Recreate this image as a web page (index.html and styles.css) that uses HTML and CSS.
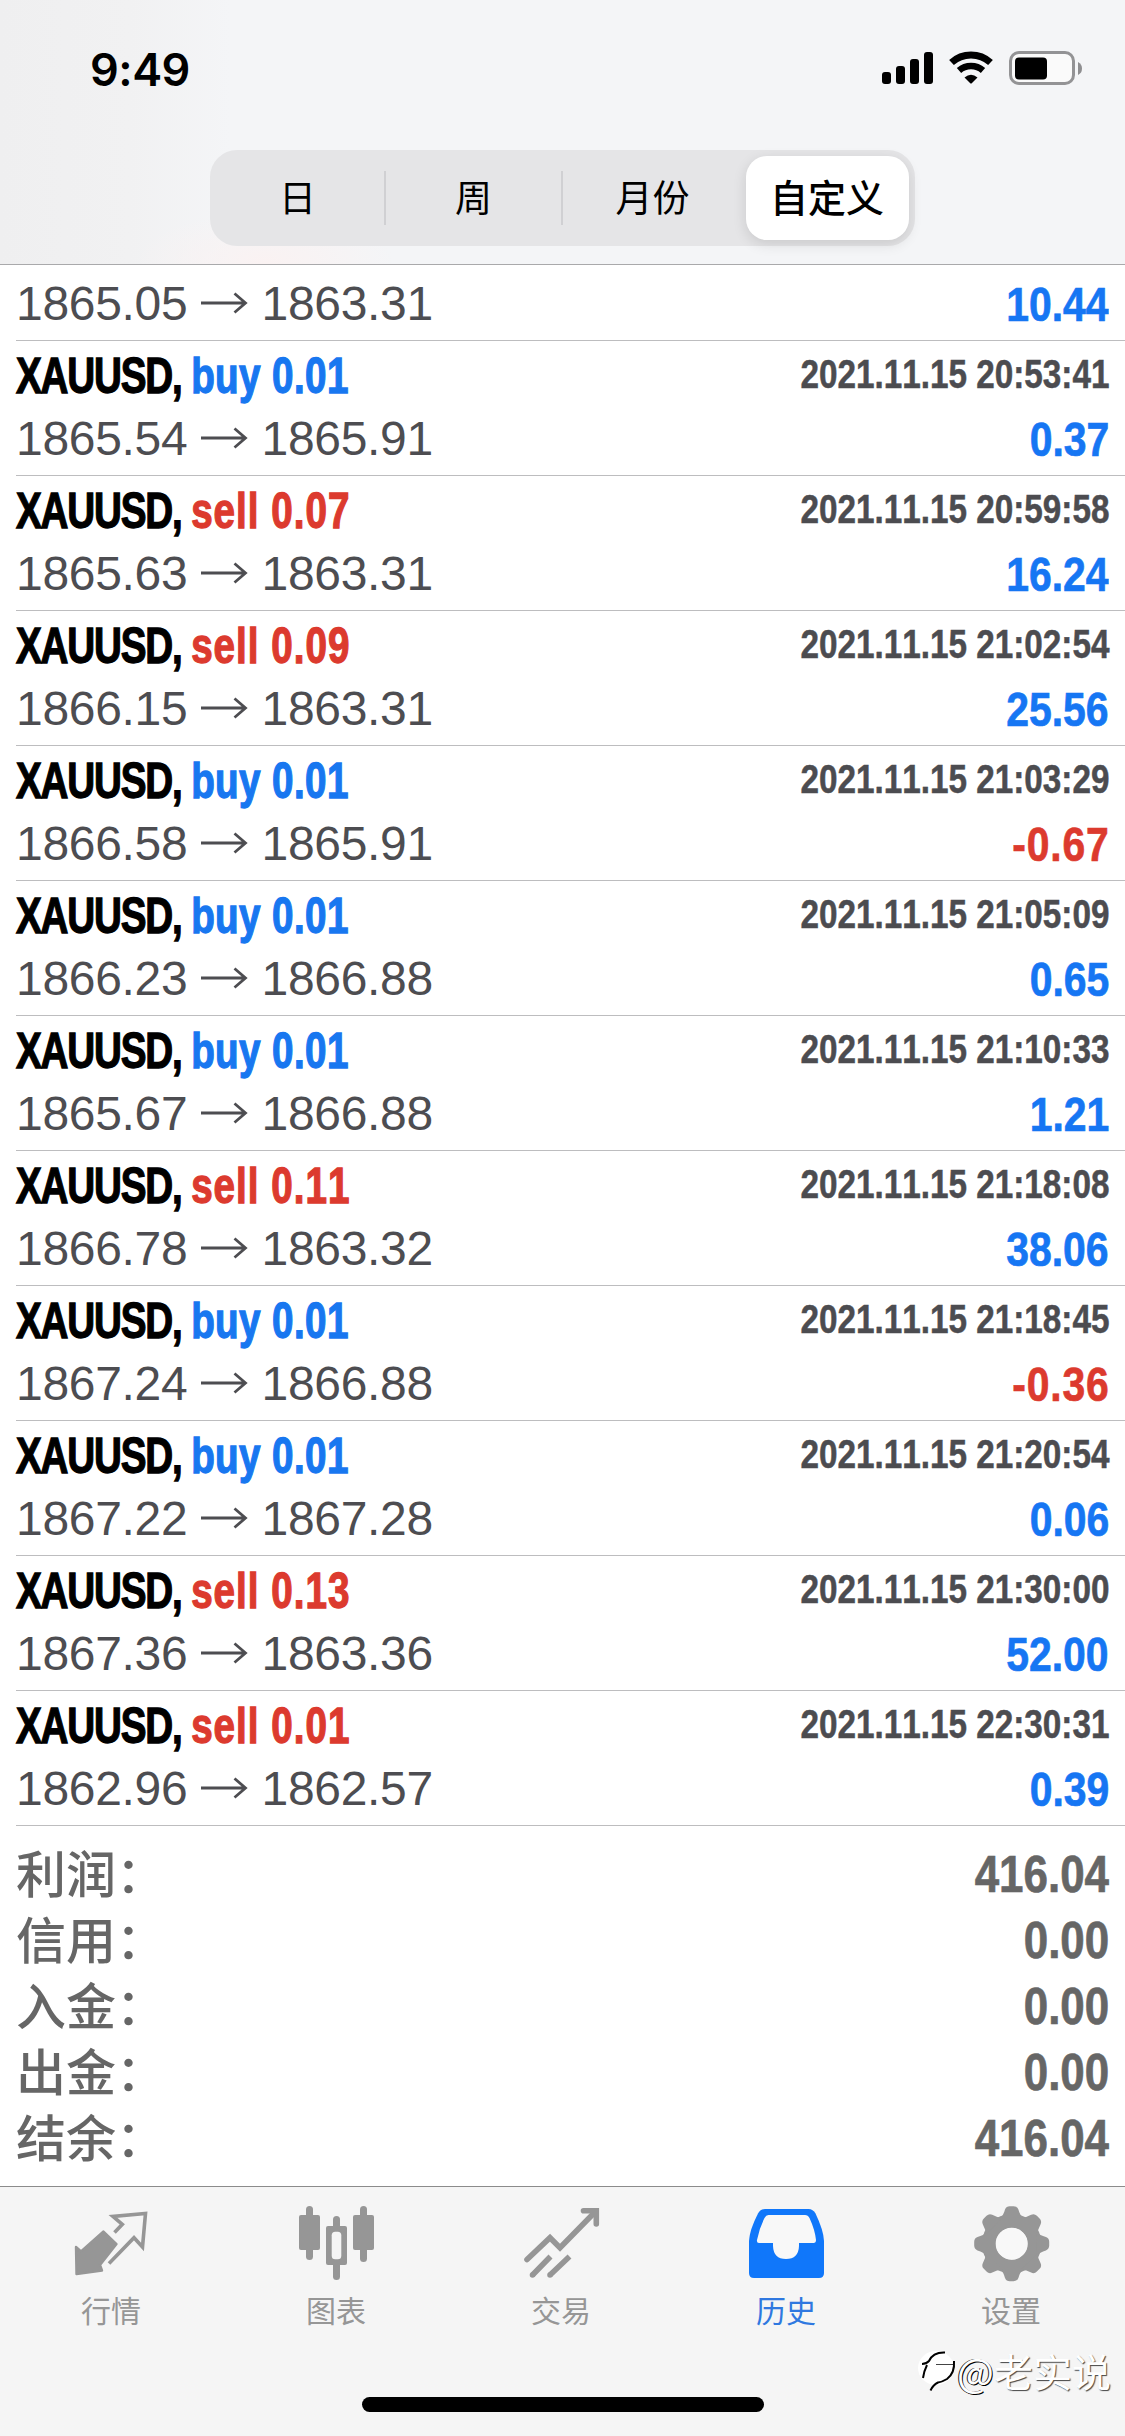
FILE: index.html
```html
<!DOCTYPE html>
<html lang="zh-CN">
<head>
<meta charset="utf-8">
<title>历史</title>
<link rel="stylesheet" href="styles.css">
</head>
<body>
<svg class="defs" width="0" height="0">
  <symbol id="arrow" viewBox="0 0 48 24"><path d="M1 12H45M34.500 2.500L45.500 12L34.500 21.500" fill="none" stroke="currentColor" stroke-width="2.800"/></symbol>
</svg>
<div class="screen">
  <header class="header">
    <div class="status">
      <span class="time">9:49</span>
      <svg class="status-icons" width="202" height="36" viewBox="0 0 202 36">
        <rect x="2" y="22" width="9" height="12" rx="3"/>
        <rect x="16" y="16" width="9" height="18" rx="3"/>
        <rect x="30" y="9" width="9" height="25" rx="3"/>
        <rect x="44" y="2" width="9" height="32" rx="3"/>
        <path d="M71.500 12.500A29 29 0 0 1 110.500 12.500" fill="none" stroke="#000" stroke-width="7"/>
        <path d="M79 20.500A18 18 0 0 1 103 20.500" fill="none" stroke="#000" stroke-width="6.500"/>
        <path d="M84.500 27.500Q91 22 97.500 27.500L92 33Q91 34 90 33Z"/>
        <rect x="130.500" y="2.500" width="63" height="31" rx="8.500" fill="#fafafa" stroke="#939395" stroke-width="3"/>
        <rect x="135" y="7.500" width="32" height="22" rx="4"/>
        <path d="M198 12Q202 14 202 18.500Q202 23 198 25Z" fill="#8e8e90"/>
      </svg>
    </div>
    <div class="segments">
      <span class="seg">日</span><span class="seg">周</span><span class="seg seg-wide">月份</span><span class="seg seg-on">自定义</span>
    </div>
  </header>

  <main class="list">
    <section class="deal deal-cut">
      <div class="line2"><span class="prices">1865.05 <svg><use href="#arrow"/></svg> 1863.31</span><b class="profit blue">10.44</b></div>
    </section>
    <section class="deal">
      <div class="line1"><b class="title">XAUUSD, <i class="buy">buy 0.01</i></b><b class="date">2021.11.15 20:53:41</b></div>
      <div class="line2"><span class="prices">1865.54 <svg><use href="#arrow"/></svg> 1865.91</span><b class="profit blue">0.37</b></div>
    </section>
    <section class="deal">
      <div class="line1"><b class="title">XAUUSD, <i class="sell">sell 0.07</i></b><b class="date">2021.11.15 20:59:58</b></div>
      <div class="line2"><span class="prices">1865.63 <svg><use href="#arrow"/></svg> 1863.31</span><b class="profit blue">16.24</b></div>
    </section>
    <section class="deal">
      <div class="line1"><b class="title">XAUUSD, <i class="sell">sell 0.09</i></b><b class="date">2021.11.15 21:02:54</b></div>
      <div class="line2"><span class="prices">1866.15 <svg><use href="#arrow"/></svg> 1863.31</span><b class="profit blue">25.56</b></div>
    </section>
    <section class="deal">
      <div class="line1"><b class="title">XAUUSD, <i class="buy">buy 0.01</i></b><b class="date">2021.11.15 21:03:29</b></div>
      <div class="line2"><span class="prices">1866.58 <svg><use href="#arrow"/></svg> 1865.91</span><b class="profit red">-0.67</b></div>
    </section>
    <section class="deal">
      <div class="line1"><b class="title">XAUUSD, <i class="buy">buy 0.01</i></b><b class="date">2021.11.15 21:05:09</b></div>
      <div class="line2"><span class="prices">1866.23 <svg><use href="#arrow"/></svg> 1866.88</span><b class="profit blue">0.65</b></div>
    </section>
    <section class="deal">
      <div class="line1"><b class="title">XAUUSD, <i class="buy">buy 0.01</i></b><b class="date">2021.11.15 21:10:33</b></div>
      <div class="line2"><span class="prices">1865.67 <svg><use href="#arrow"/></svg> 1866.88</span><b class="profit blue">1.21</b></div>
    </section>
    <section class="deal">
      <div class="line1"><b class="title">XAUUSD, <i class="sell">sell 0.11</i></b><b class="date">2021.11.15 21:18:08</b></div>
      <div class="line2"><span class="prices">1866.78 <svg><use href="#arrow"/></svg> 1863.32</span><b class="profit blue">38.06</b></div>
    </section>
    <section class="deal">
      <div class="line1"><b class="title">XAUUSD, <i class="buy">buy 0.01</i></b><b class="date">2021.11.15 21:18:45</b></div>
      <div class="line2"><span class="prices">1867.24 <svg><use href="#arrow"/></svg> 1866.88</span><b class="profit red">-0.36</b></div>
    </section>
    <section class="deal">
      <div class="line1"><b class="title">XAUUSD, <i class="buy">buy 0.01</i></b><b class="date">2021.11.15 21:20:54</b></div>
      <div class="line2"><span class="prices">1867.22 <svg><use href="#arrow"/></svg> 1867.28</span><b class="profit blue">0.06</b></div>
    </section>
    <section class="deal">
      <div class="line1"><b class="title">XAUUSD, <i class="sell">sell 0.13</i></b><b class="date">2021.11.15 21:30:00</b></div>
      <div class="line2"><span class="prices">1867.36 <svg><use href="#arrow"/></svg> 1863.36</span><b class="profit blue">52.00</b></div>
    </section>
    <section class="deal">
      <div class="line1"><b class="title">XAUUSD, <i class="sell">sell 0.01</i></b><b class="date">2021.11.15 22:30:31</b></div>
      <div class="line2"><span class="prices">1862.96 <svg><use href="#arrow"/></svg> 1862.57</span><b class="profit blue">0.39</b></div>
    </section>
    <section class="summary">
      <div class="sum"><span class="sum-label">利润：</span><b class="sum-value">416.04</b></div>
      <div class="sum"><span class="sum-label">信用：</span><b class="sum-value">0.00</b></div>
      <div class="sum"><span class="sum-label">入金：</span><b class="sum-value">0.00</b></div>
      <div class="sum"><span class="sum-label">出金：</span><b class="sum-value">0.00</b></div>
      <div class="sum"><span class="sum-label">结余：</span><b class="sum-value">416.04</b></div>
    </section>
  </main>

  <footer class="footer">
    <nav class="tabs">
      <div class="tab">
        <svg class="tab-icon" viewBox="0 0 75 76">
          <path d="M1 42L6 46.500L28.500 26.500L41.500 39L25 60L27 65.500L1.500 69Z" fill="currentColor" stroke="currentColor" stroke-width="2.400" stroke-linejoin="round"/>
          <path d="M39.500 27.500L47.300 19.300L38 11.500L70.500 8.500L67.500 42L59 32.700L34 58.500" fill="none" stroke="currentColor" stroke-width="3.600"/>
        </svg>行情</div>
      <div class="tab">
        <svg class="tab-icon" viewBox="0 0 75 76" fill="currentColor">
          <rect x="-1" y="10" width="21" height="35" rx="2"/><rect x="6" y="1" width="7" height="54" rx="3.500"/>
          <rect x="53" y="10" width="21" height="35" rx="2"/><rect x="60" y="1" width="7" height="56" rx="3.500"/>
          <rect x="33" y="11" width="7" height="64" rx="3.500"/><rect x="26" y="21" width="21" height="39" rx="2"/>
          <rect x="31.700" y="26.700" width="9.600" height="27.500" rx="3.500" fill="#f5f5f5"/>
        </svg>图表</div>
      <div class="tab">
        <svg class="tab-icon" viewBox="0 0 75 76" fill="none" stroke="currentColor" stroke-width="5.600">
          <path d="M2 54.500L25 32.700L35 42.700L70 7" stroke-linecap="round"/>
          <path d="M58.500 5.800H71.300V19" stroke-linecap="round"/>
          <path d="M7.500 70L25.500 51.500M25 70L44.500 51.500" />
          <path d="M7.500 70h.01M25 70h.01" stroke-linecap="round"/>
        </svg>交易</div>
      <div class="tab tab-on">
        <svg class="tab-icon" viewBox="0 0 75 76" fill="#1077fa">
          <path d="M-1 68V36Q-.5 25 8 8.500Q10.500 4 15 4H58.500Q63 4 65.500 8.500Q73.500 25 74 36V68Q74 73 69 73H4Q-1 73 -1 68Z"/>
          <path d="M18.500 10H55Q58 10 59.500 13Q65 25 66 35Q66 38 63.500 38H49V41Q48.500 54 36 54Q23.500 54 23 41V38H9Q6.500 38 7 35Q9 24 14.500 13Q16 10 18.500 10Z" fill="#f8f8f8"/>
        </svg>历史</div>
      <div class="tab">
        <svg class="tab-icon" viewBox="0 0 75 76" fill="currentColor">
          <defs><path id="tooth" d="M24.500 14Q28.500 10.500 30 4.500Q31.300 1.200 34.800 1.200H38.600Q42.100 1.200 43.400 4.500Q44.900 10.500 48.900 14Z"/></defs>
          <circle cx="36.700" cy="38.700" r="22.700" fill="none" stroke="currentColor" stroke-width="14"/>
          <use href="#tooth"/><use href="#tooth" transform="rotate(45 36.700 38.700)"/><use href="#tooth" transform="rotate(90 36.700 38.700)"/><use href="#tooth" transform="rotate(135 36.700 38.700)"/><use href="#tooth" transform="rotate(180 36.700 38.700)"/><use href="#tooth" transform="rotate(225 36.700 38.700)"/><use href="#tooth" transform="rotate(270 36.700 38.700)"/><use href="#tooth" transform="rotate(315 36.700 38.700)"/>
          <circle cx="36.700" cy="38.700" r="16" fill="#f8f8f8"/>
        </svg>设置</div>
    </nav>
    <div class="home"></div>
    <div class="mark">
      <svg width="40" height="46" viewBox="0 0 40 46">
        <ellipse cx="19" cy="21" rx="18" ry="17" fill="#fff"/>
        <path d="M6 31Q7 24 10 18M5 17Q9 17 12 14Q16 5 28 5.500" fill="none" stroke="#000" stroke-width="2"/>
        <path d="M19 17.500H37" stroke="#444" stroke-width="1"/>
        <path d="M37 14Q38 26 30 32Q25 35 21 35.500Q16 38 13.500 43.500" fill="none" stroke="#000" stroke-width="2"/>
      </svg><span><span class="at">@</span>老实说</span>
    </div>
  </footer>
</div>
</body>
</html>
```
FILE: styles.css
```css
* { box-sizing: border-box; }
body {
  margin: 0;
  background: #fff;
  font-family: "Liberation Sans", "Noto Sans CJK SC", sans-serif;
  font-kerning: none;
}
.defs { position: absolute; }
.screen {
  width: 1125px;
  height: 2436px;
  display: flex;
  flex-direction: column;
  overflow: hidden;
}

/* header */
.header {
  height: 265px;
  flex: none;
  border-bottom: 1px solid #a9a9ab;
  background:
    radial-gradient(ellipse 130px 50px at 265px 262px, #faf2f2, #faf2f200),
    linear-gradient(90deg, #efeff0 0, #f1f1f2 130px, #f4f5f7 230px, #f4f5f7 100%);
}
.status {
  height: 150px;
  padding: 50px 43px 0 90px;
  display: flex;
  justify-content: space-between;
  align-items: flex-start;
}
.time {
  font: 600 45px/39px Inter, sans-serif;
  letter-spacing: -.5px;
}
.segments {
  width: 705px;
  height: 96px;
  margin-left: 210px;
  padding: 6px;
  border-radius: 27px;
  background: #e5e5e7;
  display: flex;
  align-items: center;
}
.seg {
  width: 177px;
  height: 54px;
  border-right: 2px solid #d0d0d3;
  text-align: center;
  font: 400 37px/50px "Noto Sans CJK SC", sans-serif;
}
.seg:first-child { width: 170px; padding-right: 5px; }
.seg-wide { width: 183px; border: 0; padding-right: 4px; }
.seg-on {
  width: 163px;
  height: 84px;
  line-height: 80px;
  border: 0;
  padding-right: 1px;
  border-radius: 21px;
  background: #fff;
  font-size: 38px;
  font-weight: 500;
  box-shadow: 0 4px 14px rgba(0, 0, 0, .12);
}

/* deals */
.list { flex: none; background: #fff; }
.deal {
  height: 135px;
  margin-left: 16px;
  padding-right: 16px;
  border-bottom: 1px solid #bdbdbf;
}
.deal-cut { height: 76px; padding-top: 9px; }
.line1, .line2, .sum { display: flex; justify-content: space-between; align-items: flex-start; white-space: nowrap; }
.line1 { height: 68px; }
.title {
  font-size: 49.5px;
  line-height: 69px;
  letter-spacing: -1.5px;
  transform: scaleX(.78);
  transform-origin: 0 0;
  -webkit-text-stroke: 1.3px currentColor;
}
.title i { font-style: normal; }
.buy { color: #1877f0; letter-spacing: .5px; }
.sell { color: #dc3a2e; letter-spacing: 1.3px; }
.date {
  font-size: 40px;
  line-height: 67px;
  color: #4c4c50;
  transform: scaleX(.832);
  transform-origin: 100% 0;
  -webkit-text-stroke: .5px currentColor;
}
.prices { font-size: 48px; line-height: 60px; color: #4d4d51; letter-spacing: -.3px; }
.prices svg { width: 48px; height: 24px; vertical-align: 5px; }
.profit {
  font-size: 49px;
  line-height: 60px;
  transform: scaleX(.835);
  transform-origin: 100% 0;
  -webkit-text-stroke: .7px currentColor;
}
.blue { color: #1676f3; }
.red { color: #dc3a2e; letter-spacing: 1px; margin-right: -1px; }

/* totals */
.summary { padding: 15px 16px; color: #666; }
.sum { height: 66px; }
.sum-label { font: 500 50px/60px "Noto Sans CJK SC", sans-serif; }
.sum-value {
  font-size: 52px;
  line-height: 66px;
  transform: scaleX(.845);
  transform-origin: 100% 0;
  -webkit-text-stroke: .7px currentColor;
}

/* tab bar */
.footer {
  position: relative;
  flex: 1;
  border-top: 1px solid #8b8b8b;
  background: #f5f5f5;
}
.tabs { display: flex; padding-top: 18px; }
.tab {
  width: 225px;
  display: flex;
  flex-direction: column;
  align-items: center;
  font: 400 30px/44px "Noto Sans CJK SC", sans-serif;
  color: #969696;
  padding-right: 3px;
}
.tab-icon { width: 75px; height: 76px; margin: 0 -3px 6px 0; overflow: visible; }
.tab-on { color: #2f78e0; }
.home {
  width: 402px;
  height: 15px;
  margin: 66px 0 0 362px;
  border-radius: 8px;
  background: #000;
}
.mark {
  position: absolute;
  left: 917px;
  top: 160px;
  display: flex;
  align-items: center;
  font: 400 39px/46px "Noto Sans CJK SC", sans-serif;
  color: #fff;
  text-shadow: 1px 1px 1px #444;
}
.at { text-shadow: 1px 1px 0 #000, -1px 0 0 #222; }
```
